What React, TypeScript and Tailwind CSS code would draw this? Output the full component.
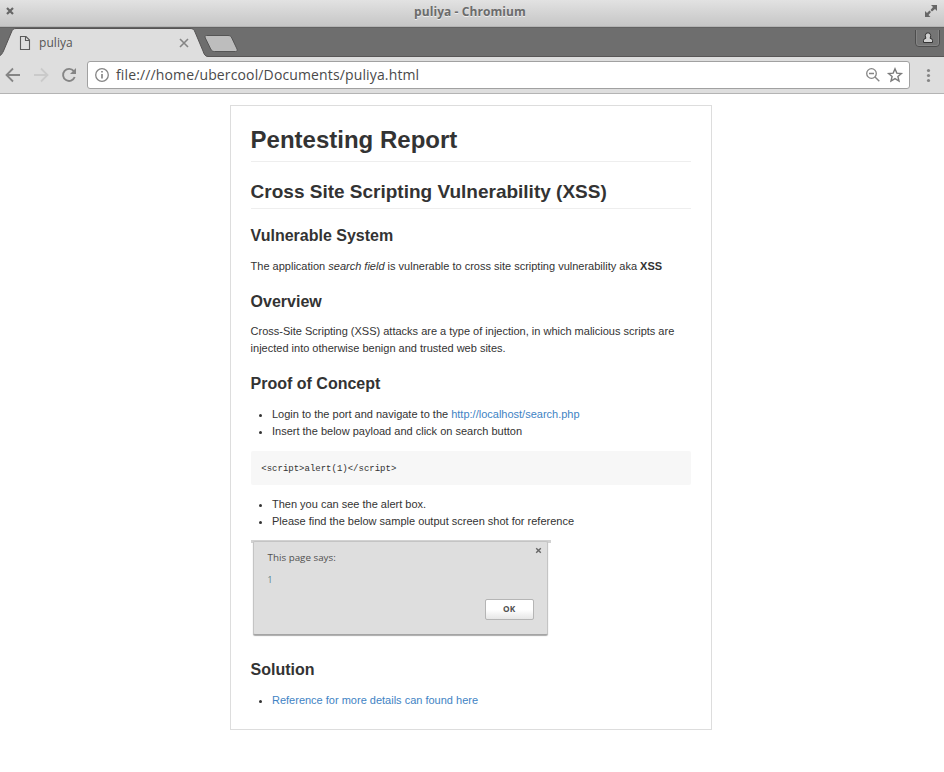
import type { ReactNode } from "react";

const uiFont = "font-['Open_Sans','Noto_Sans',sans-serif]";

function TitleBar() {
  return (
    <div className="relative flex h-[27px] items-center justify-center border-b border-[#b4b4b4] bg-linear-to-b from-[#e2e2e2] to-[#c6c6c6]">
      <svg className="absolute left-[5px] top-[6px]" width="10" height="10" viewBox="0 0 10 10">
        <path d="M2 2L8 8M8 2L2 8" stroke="#666" strokeWidth="2.2" />
      </svg>
      <span className="relative -top-[1px] left-[-2px] text-[12px] leading-4 font-bold tracking-[.08px] text-[#6b6b6b] [text-shadow:0_1px_0_#eee]">
        puliya - Chromium
      </span>
      <svg className="absolute left-[924px] top-[5px]" width="14" height="13" viewBox="0 0 14 13">
        <path d="M7 0h6v6l-2-2-3 2.500L6.500 5 9 2zM1 6l2 2 2.500-2.500L7 7 4.500 10l2 2H1z" fill="#666" />
      </svg>
    </div>
  );
}

function TabStrip() {
  return (
    <div className="relative h-[30px] bg-[#6e6e6e]">
      <svg className="absolute inset-0" width="944" height="30" viewBox="0 0 944 30">
        <path d="M0 .5H944" stroke="#626262" />
        <path d="M0 29.500H944" stroke="#585656" />
        <path d="M0 30V28.500C1.500 28 2.500 26 3.500 24L11.500 5C12.500 2.500 13.500 1.500 16 1.500H190C193 1.500 194 2.500 195 5L203 24C204 27 205 29.500 208 29.500V30Z" fill="#dedede" />
        <path d="M0 28.500C1.500 28 2.500 26 3.500 24L11.500 5C12.500 2.500 13.500 1.500 16 1.500H190C193 1.500 194 2.500 195 5L203 24C204 27 205 29.500 208 29.500" fill="none" stroke="#565454" />
        <path d="M206.500 8.500H228C230 8.500 231 9.300 231.800 11L237 22C237.700 23.500 237 24.500 235.500 24.500H214.500C212.500 24.500 211.500 23.700 210.700 22L205.300 11C204.700 9.500 205 8.500 206.500 8.500Z" fill="#bdbdbd" stroke="#555" />
        <path d="M20.500 9.500H26L29.500 13V22.500H20.500ZM25.500 9.500V13.500H29.500" fill="none" stroke="#5a5a5a" strokeWidth="1.100" />
        <path d="M180 12L188 20M188 12L180 20" stroke="#858585" strokeWidth="1.600" />
        <path d="M915.500 3V16Q915.500 19.500 919 19.500H936Q939.500 19.500 939.500 16V3" fill="#757575" stroke="#4d4d4d" />
        <path d="M916.500 3V16Q916.500 18.500 919 18.500H936Q938.500 18.500 938.500 16V3" fill="none" stroke="#8c8c8c" strokeWidth=".7" />
        <path d="M923.500 15.500V13.500Q923.500 11.500 926 11.200Q925.300 10.200 925.300 8.500A2.700 2.700 0 0 1 930.700 8.500Q930.700 10.200 930 11.200Q932.500 11.500 932.500 13.500V15.500Z" fill="#d2d2d2" stroke="#333" />
      </svg>
      <span className="absolute left-[39px] top-[8px] text-[12px] leading-4 tracking-[.05px] text-[#555]">puliya</span>
    </div>
  );
}

function Toolbar() {
  return (
    <div className="flex h-[37px] items-start border-b border-[#b4b4b4] bg-[#dedede] pt-[4px]">
      <svg className="shrink-0" width="87" height="28" viewBox="0 0 87 28">
        <path d="M20 14H7.500M13 7.500L6.500 14L13 20.500" fill="none" stroke="#858585" strokeWidth="1.800" />
        <path d="M34 14H47M41 7.500L47.500 14L41 20.500" fill="none" stroke="#cacaca" strokeWidth="1.800" />
        <path d="M73.800 10.200A6 6 0 1 0 74.700 16" fill="none" stroke="#858585" strokeWidth="1.900" />
        <path d="M76 7v6h-6z" fill="#858585" />
      </svg>
      <div className="relative h-[28px] w-[823px] shrink-0 rounded-[3px] border border-[#a1a1a1] bg-white">
        <svg className="absolute left-0 top-0" width="821" height="26" viewBox="0 0 821 26">
          <circle cx="14" cy="13" r="6.300" fill="none" stroke="#858585" strokeWidth="1.300" />
          <path d="M14 12V16.500M14 9V10.500" stroke="#777" strokeWidth="1.500" />
          <circle cx="783.500" cy="11.500" r="4.800" fill="none" stroke="#858585" strokeWidth="1.300" />
          <path d="M781 11.500h5M787 15L791.300 19.300" stroke="#858585" strokeWidth="1.400" />
          <path d="M807 6.800L808.800 11.100L813.400 11.500L809.900 14.500L811 19L807 16.600L803 19L804.100 14.500L800.600 11.500L805.200 11.100Z" fill="none" stroke="#7b7b7b" strokeWidth="1.400" />
        </svg>
        <span className="absolute left-[28px] top-[3px] whitespace-nowrap text-[14px] leading-5 tracking-[.135px] text-[#4a4a4a]">
          file:///home/ubercool/Documents/puliya.html
        </span>
      </div>
      <svg width="34" height="28" viewBox="0 0 34 28" fill="#858585">
        <circle cx="18.500" cy="9.500" r="1.600" />
        <circle cx="18.500" cy="14.500" r="1.600" />
        <circle cx="18.500" cy="19.500" r="1.600" />
      </svg>
    </div>
  );
}

function Section({ children, className }: { children: ReactNode; className: string }) {
  return <h3 className={`h-[20px] text-[16px] leading-[22px] font-bold ${className}`}>{children}</h3>;
}

function Bullet({ children }: { children: ReactNode }) {
  return (
    <li className="flex h-[17px] items-center">
      <span className="mt-[2px] ml-[8px] mr-[10.400px] size-[3px] rounded-full bg-[#333]" />
      <span>{children}</span>
    </li>
  );
}

function AlertShot() {
  return (
    <div className={`mt-[10px] flex h-[96px] w-[300px] flex-col items-center ${uiFont}`}>
      <div className="h-[3px] w-full shrink-0 bg-[#d2d2d2]" />
      <div className="relative -mt-[2px] h-[94px] w-[295px] rounded-[2px] border border-[#c4c4c4] border-b-[#a4a4a4] bg-[#dedede] shadow-[0_1px_1px_#aaa]">
        <span className="absolute left-[13.500px] top-[9px] whitespace-nowrap text-[9.800px] leading-[13px] text-[#505050]">This page says:</span>
        <span className="absolute left-[13.500px] top-[32px] text-[8.500px] leading-[11px] text-[#55808c]">1</span>
        <svg className="absolute left-[281px] top-[5px]" width="7" height="7" viewBox="0 0 7 7">
          <path d="M1.200 1.200L5.800 5.800M5.800 1.200L1.200 5.800" stroke="#666" strokeWidth="1.400" />
        </svg>
        <div className="absolute left-[231px] top-[57px] flex h-[21px] w-[49px] items-center justify-center rounded-[2px] border border-[#b5b5b5] bg-linear-to-b from-white from-50% to-[#e6e6e6] pr-[1px] text-[8.300px] leading-none font-bold text-[#505050]">
          OK
        </div>
      </div>
    </div>
  );
}

export default function App() {
  return (
    <div className="h-[772px] w-[944px] overflow-hidden bg-white">
      <header className={uiFont}>
        <TitleBar />
        <TabStrip />
        <Toolbar />
      </header>
      <article className="mt-[11px] ml-[230px] h-[625px] w-[482px] border border-[#dddddd] pt-[19px] pr-[20px] pl-[19.600px] font-['Liberation_Sans',Arial,sans-serif] text-[11px] leading-[17px] text-[#333]">
        <h1 className="h-[37px] border-b border-[#eeeeee] text-[24px] leading-[29px] font-bold">Pentesting Report</h1>
        <h2 className="mt-[18px] h-[29px] border-b border-[#eeeeee] text-[19px] leading-[23px] font-bold">
          Cross Site Scripting Vulnerability (XSS)
        </h2>
        <Section className="mt-[16px]">Vulnerable System</Section>
        <p className="mt-[13px]">
          The application <em>search field</em> is vulnerable to cross site scripting vulnerability aka <strong>XSS</strong>
        </p>
        <Section className="mt-[16px]">Overview</Section>
        <p className="mt-[12px]">
          Cross-Site Scripting (XSS) attacks are a type of injection, in which malicious scripts are injected into otherwise
          benign and trusted web sites.
        </p>
        <Section className="mt-[16px]">Proof of Concept</Section>
        <ul className="mt-[13px]">
          <Bullet>
            Login to the port and navigate to the <span className="text-[#4183c4]">http://localhost/search.php</span>
          </Bullet>
          <Bullet>Insert the below payload and click on search button</Bullet>
        </ul>
        <pre className="mt-[11px] h-[34px] rounded-[2px] bg-[#f7f7f7] pl-[10.700px] font-['Liberation_Mono',monospace] text-[9px] leading-[36px]">
          {"<script>alert(1)</script>"}
        </pre>
        <ul className="mt-[11px]">
          <Bullet>Then you can see the alert box.</Bullet>
          <Bullet>Please find the below sample output screen shot for reference</Bullet>
        </ul>
        <AlertShot />
        <Section className="mt-[23px]">Solution</Section>
        <ul className="mt-[13px]">
          <Bullet>
            <span className="text-[#4183c4]">Reference for more details can found here</span>
          </Bullet>
        </ul>
      </article>
    </div>
  );
}
